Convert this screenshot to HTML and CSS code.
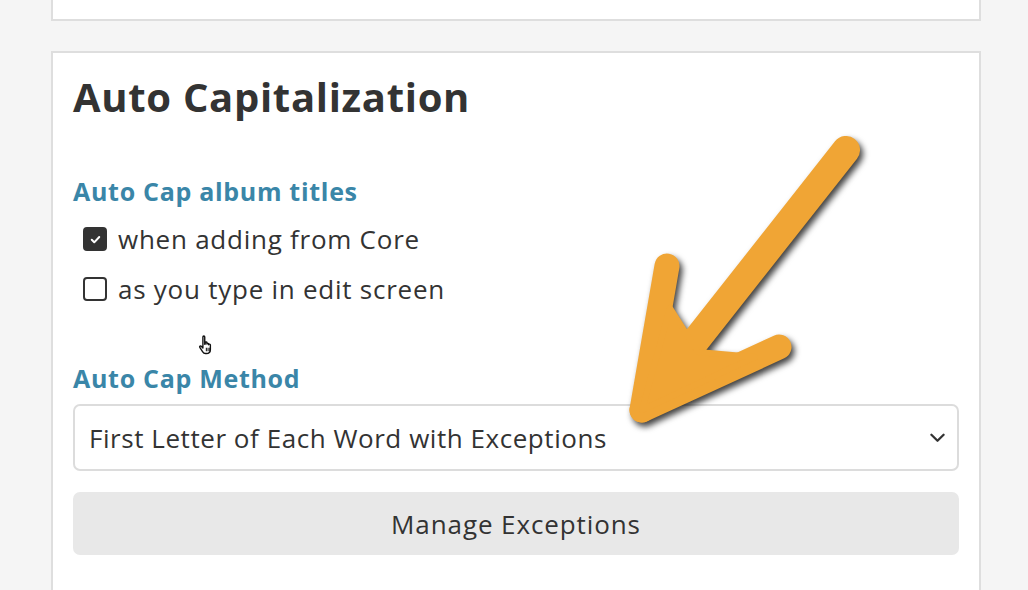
FILE: index.html
```html
<!DOCTYPE html>
<html lang="en">
<head>
<meta charset="utf-8">
<title>Auto Capitalization</title>
<link rel="stylesheet" href="styles.css">
</head>
<body>
<div class="page">
  <div class="card card-top"></div>
  <div class="card">
    <h1 class="title">Auto Capitalization</h1>
    <div class="group">
      <h3 class="label">Auto Cap album titles</h3>
      <label class="check">
        <span class="box checked"><svg viewBox="0 0 24 24" width="15" height="15"><path d="M6 12.5l4 4 8-8.5" fill="none" stroke="#fff" stroke-width="3.2" stroke-linecap="round" stroke-linejoin="round"/></svg></span>
        <span>when adding from Core</span>
      </label>
      <label class="check">
        <span class="box"></span>
        <span>as you type in edit screen</span>
      </label>
    </div>
    <div class="group group-method">
      <h3 class="label">Auto Cap Method</h3>
      <div class="select">
        <span>First Letter of Each Word with Exceptions</span>
        <svg class="chev" viewBox="0 0 16 10" width="15" height="10"><path d="M1.5 1.5L8 8l6.5-6.5" fill="none" stroke="#333" stroke-width="2.4" stroke-linecap="round" stroke-linejoin="round"/></svg>
      </div>
      <button class="btn">Manage Exceptions</button>
    </div>
  </div>
</div>

<svg class="cursor" viewBox="0 0 18 20" width="21" height="23">
  <path d="M5 2.5c0-1 1.6-1 1.6 0V9l.4-.2V7.6c0-.9 1.5-.9 1.5 0v1.2c.1-.9 1.5-.9 1.5 0v.5c.2-.8 1.5-.7 1.5.2v4c0 2-1.3 3.5-3.5 3.5H7.3c-1.2 0-2-.6-2.6-1.6L2.3 11.6c-.5-.8.6-1.6 1.3-.9L5 12.2z" fill="#fff" stroke="#111" stroke-width="1.2" stroke-linejoin="round"/>
  <path d="M8 12v3M9.5 12v3M11 12v3" stroke="#111" stroke-width=".9"/>
</svg>

<svg class="arrow" viewBox="0 0 1028 590" width="1028" height="590">
  <g fill="#f0a535" stroke="#f0a535" stroke-linecap="round" stroke-linejoin="round">
    <line x1="846" y1="150" x2="660" y2="386" stroke-width="28"/>
    <line x1="667" y1="266" x2="642" y2="410" stroke-width="25"/>
    <line x1="779" y1="347" x2="642" y2="410" stroke-width="25"/>
    <polygon points="670,308 642,410 755,357 698,352" stroke-width="6"/>
  </g>
</svg>
</body>
</html>
```

FILE: styles.css
```css
* { box-sizing: border-box; }
html, body { margin: 0; padding: 0; }
body {
  background: #f5f5f5;
  font-family: "Open Sans", "Lato", sans-serif;
  color: #333;
  width: 1028px;
  height: 590px;
  overflow: hidden;
  position: relative;
}
.page {
  padding-left: 51px;
}
.card {
  width: 930px;
  background: #fff;
  border: 2px solid #dedede;
  padding: 20px 20px 40px;
}
.card-top {
  height: 21px;
  border-top: 0;
  padding: 0;
  margin-bottom: 30px;
}
.title {
  margin: 0;
  font-size: 40px;
  letter-spacing: 0.7px;
  line-height: 48px;
  font-weight: 700;
  color: #333;
}
.group { margin-top: 55px; }
.group-method { margin-top: 54px; }
.label {
  margin: 0 0 13px;
  font-size: 25px;
  letter-spacing: 0.7px;
  line-height: 30px;
  font-weight: 700;
  color: #3a86a8;
}
.check {
  display: flex;
  align-items: center;
  height: 40px;
  margin-bottom: 10px;
  padding-left: 10px;
  font-size: 26px;
  letter-spacing: 0.75px;
  gap: 11px;
}
.box {
  width: 24px;
  height: 24px;
  border: 2px solid #333;
  border-radius: 4px;
  display: flex;
  align-items: center;
  justify-content: center;
  flex: none;
}
.box.checked { background: #333; }
.group-method .label { margin-bottom: 11px; }
.select {
  height: 67px;
  border: 2px solid #dcdcdc;
  border-radius: 7px;
  display: flex;
  align-items: center;
  justify-content: space-between;
  padding: 0 12px 0 14px;
  font-size: 26px;
  letter-spacing: 0.55px;
}
.chev { flex: none; }
.btn {
  display: block;
  width: 100%;
  margin-top: 21px;
  height: 63px;
  border: 0;
  border-radius: 7px;
  background: #e8e8e8;
  font-family: inherit;
  font-size: 26px;
  letter-spacing: 0.9px;
  color: #333;
}
.cursor {
  position: absolute;
  left: 197px;
  top: 334px;
}
.arrow {
  position: absolute;
  left: 0;
  top: 0;
  pointer-events: none;
  filter: drop-shadow(3px 4px 3px rgba(0,0,0,0.75));
}
```
